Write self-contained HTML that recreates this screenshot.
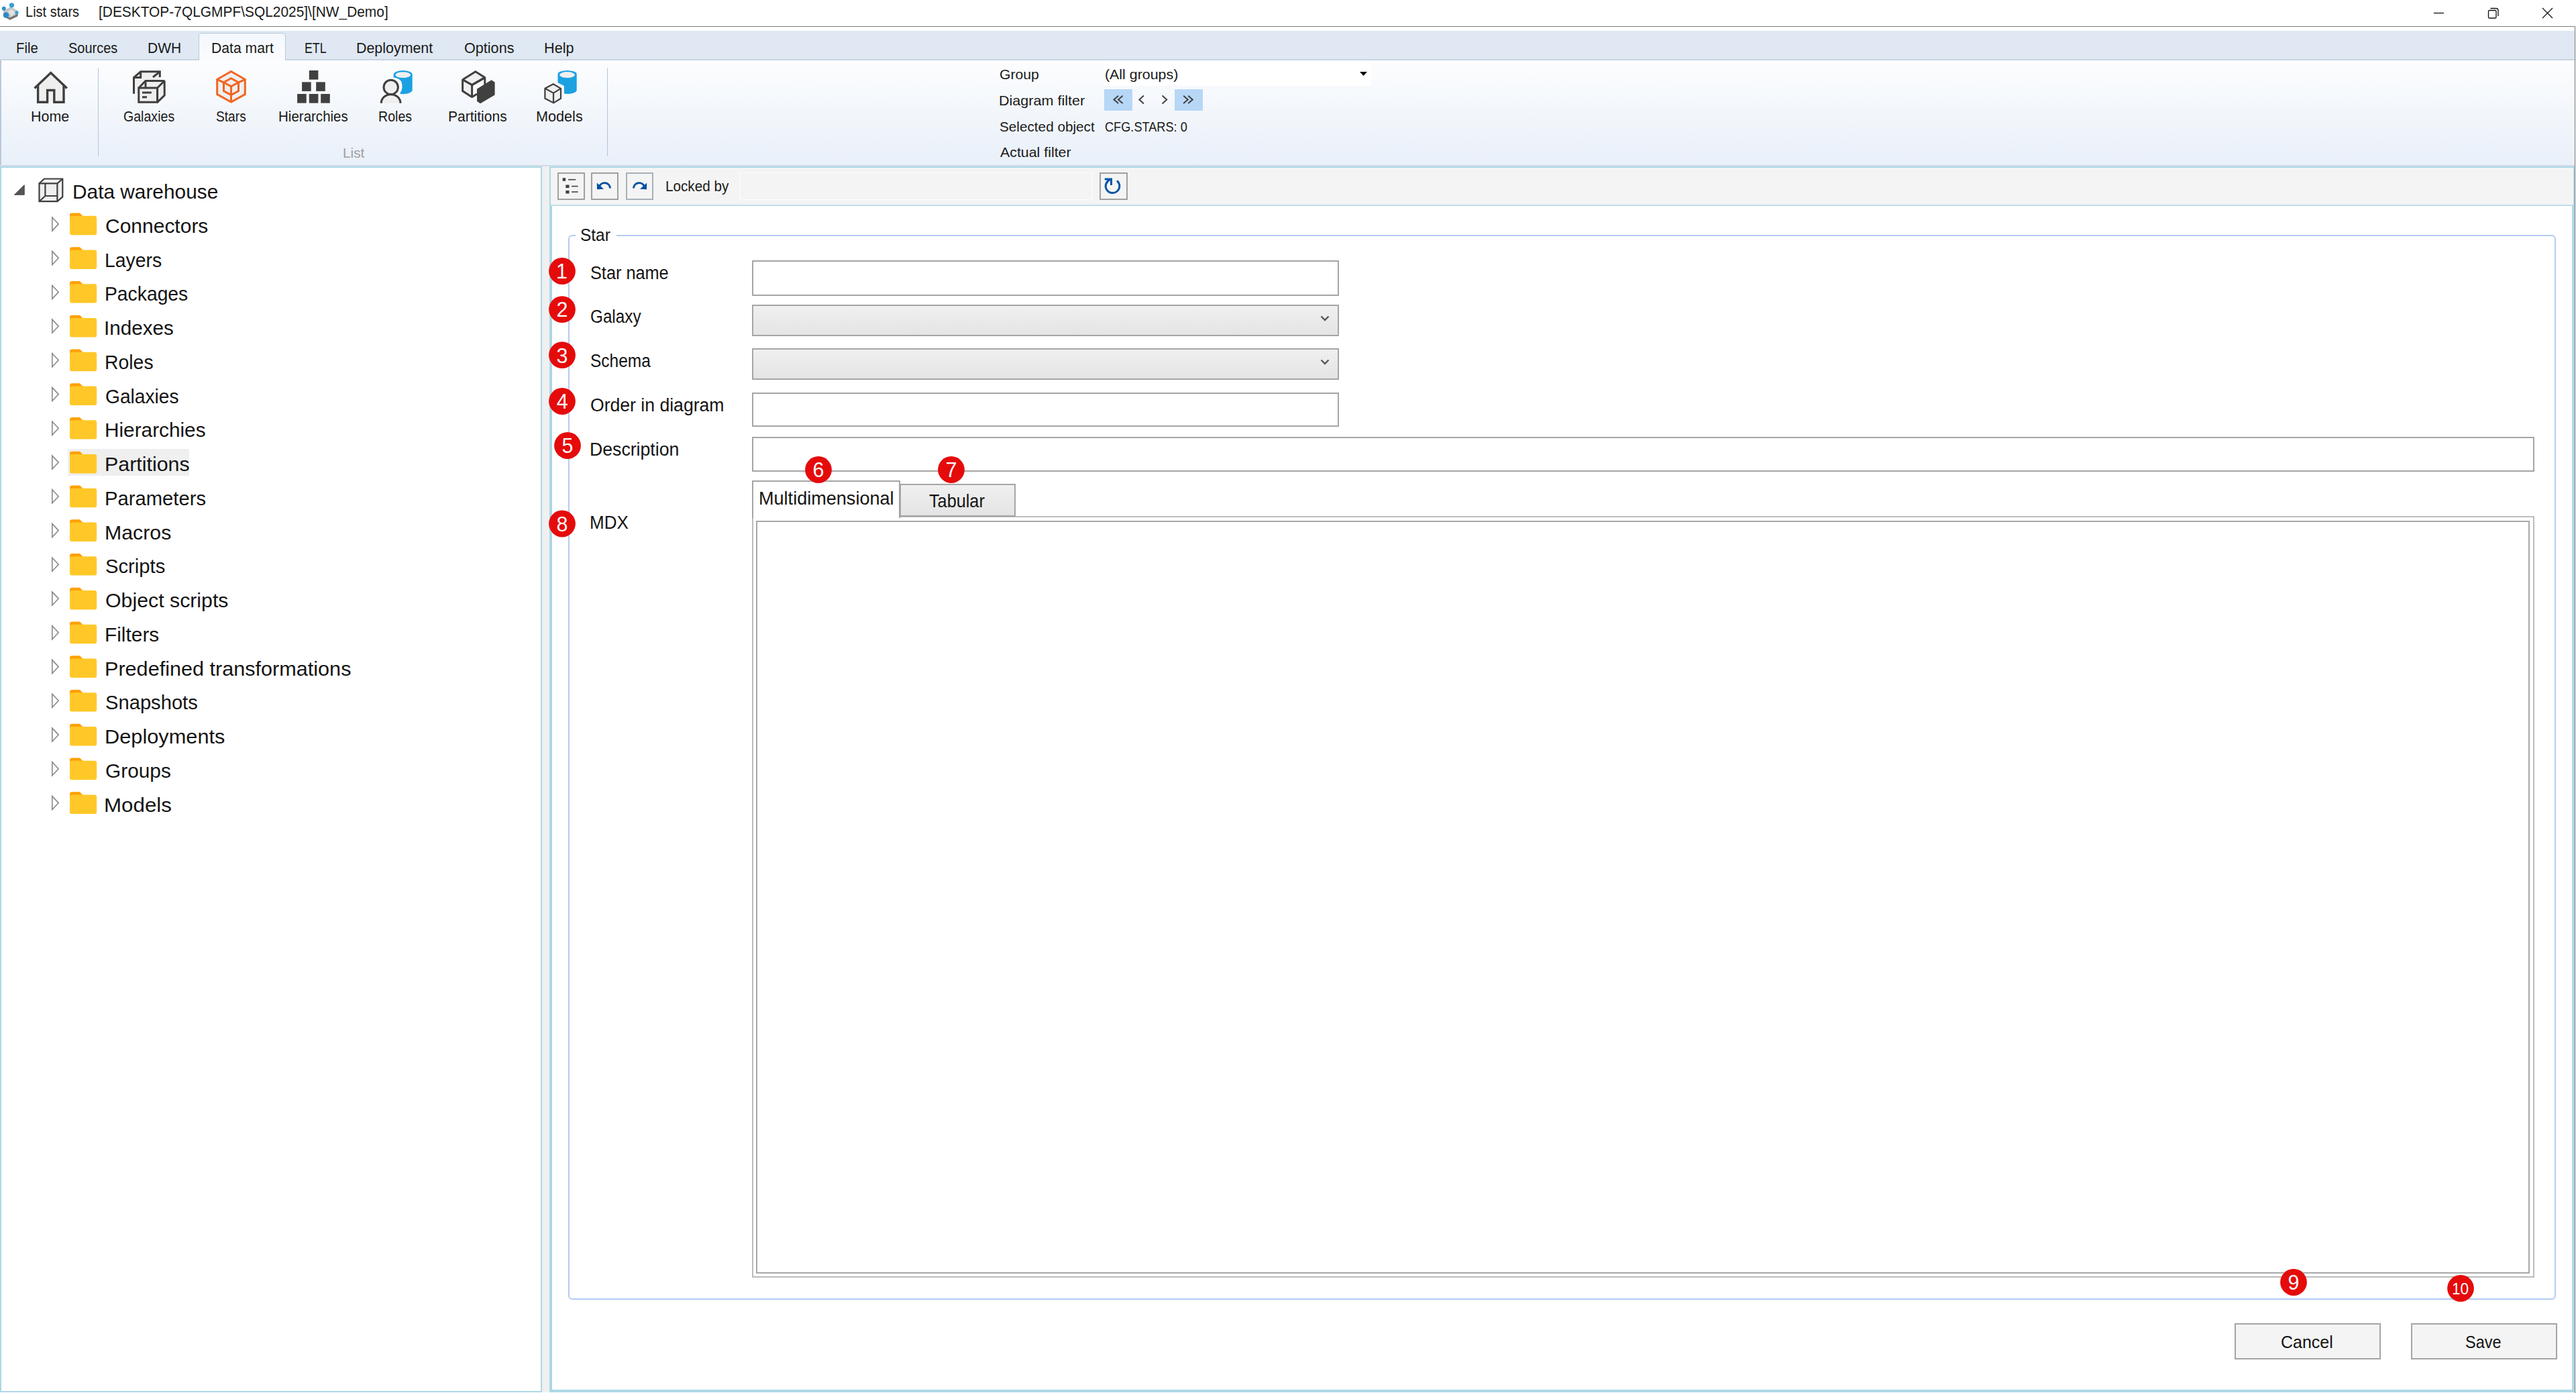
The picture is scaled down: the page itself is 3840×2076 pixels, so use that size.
<!DOCTYPE html>
<html><head><meta charset="utf-8"><title>List stars</title>
<style>
html,body{margin:0;padding:0;}
body{width:3840px;height:2076px;position:relative;overflow:hidden;background:#fff;font-family:"Liberation Sans",sans-serif;}
.r{position:absolute;}
.t{position:absolute;white-space:nowrap;transform-origin:0 0;}
svg{position:absolute;left:0;top:0;}
</style></head><body>
<div class="r" style="left:0px;top:39px;width:3839px;height:1px;background:#7a7a7a"></div>
<div class="r" style="left:3838px;top:39px;width:1px;height:2037px;background:#7a7a7a"></div>
<div class="r" style="left:0px;top:46px;width:3838px;height:42px;background:#dfe8f3"></div>
<div class="r" style="left:0px;top:88px;width:3838px;height:2px;background:#c8d5e2"></div>
<div class="r" style="left:0px;top:90px;width:3838px;height:156px;background:linear-gradient(#fcfdfe,#e9f0f9);border-left:2px solid #b9c9da;box-sizing:border-box"></div>
<div class="r" style="left:296px;top:49px;width:130px;height:41px;background:linear-gradient(#f4f7fc,#fbfcfe);border:1px solid #b9c9db;border-bottom:none;border-radius:5px 5px 0 0;box-sizing:border-box"></div>
<div class="r" style="left:297px;top:88px;width:128px;height:3px;background:#fbfcfe"></div>
<div class="r" style="left:0px;top:246px;width:3838px;height:1px;background:#cad6e3"></div>
<div class="r" style="left:0px;top:247px;width:3838px;height:1px;background:#d9e1ec"></div>
<div class="r" style="left:146px;top:101px;width:1px;height:132px;background:#b3c6da"></div>
<div class="r" style="left:905px;top:101px;width:1px;height:132px;background:#b3c6da"></div>
<div class="r" style="left:1645px;top:93px;width:399px;height:35px;background:#fff"></div>
<div class="r" style="left:1646px;top:133px;width:42px;height:32px;background:#b7d7f6"></div>
<div class="r" style="left:1751px;top:133px;width:42px;height:32px;background:#b7d7f6"></div>
<div class="r" style="left:0px;top:248px;width:808px;height:1827px;background:#fff;border:2px solid #acd8e6;box-sizing:border-box"></div>
<div class="r" style="left:808px;top:248px;width:11px;height:1827px;background:#f0f0f0"></div>
<div class="r" style="left:819px;top:248px;width:3019px;height:1827px;background:#fff;border:2px solid #acd8e6;box-sizing:border-box"></div>
<div class="r" style="left:821px;top:307px;width:2px;height:1766px;background:#acd8e6"></div>
<div class="r" style="left:3834px;top:307px;width:2px;height:1766px;background:#acd8e6"></div>
<div class="r" style="left:821px;top:2071px;width:3015px;height:2px;background:#acd8e6"></div>
<div class="r" style="left:821px;top:250px;width:3015px;height:55px;background:#f4f4f4"></div>
<div class="r" style="left:821px;top:305px;width:3015px;height:2px;background:#bfe0ea"></div>
<div class="r" style="left:831px;top:257px;width:41px;height:41px;background:#f4f4f4;border:2px solid #a0a0a0;box-sizing:border-box"></div>
<div class="r" style="left:881px;top:257px;width:41px;height:41px;background:#f4f4f4;border:2px solid #a0a0a0;box-sizing:border-box"></div>
<div class="r" style="left:933px;top:257px;width:41px;height:41px;background:#f4f4f4;border:2px solid #a8b0b8;box-sizing:border-box"></div>
<div class="r" style="left:1639px;top:257px;width:42px;height:41px;background:#f4f4f4;border:2px solid #a0a0a0;box-sizing:border-box"></div>
<div class="r" style="left:1103px;top:257px;width:525px;height:41px;background:#f4f4f4;border:1px solid #fdfdfd;box-sizing:border-box"></div>
<div class="r" style="left:847px;top:350px;width:2963px;height:1587px;border:2px solid #b4cbf2;border-radius:6px;box-sizing:border-box"></div>
<div class="r" style="left:858px;top:345px;width:61px;height:10px;background:#fff"></div>
<div class="r" style="left:1121px;top:388px;width:875px;height:53px;background:#fff;border:2px solid #a5a5a5;box-sizing:border-box"></div>
<div class="r" style="left:1121px;top:454px;width:875px;height:47px;background:linear-gradient(#f0f0f0,#e4e4e4);border:2px solid #a5a5a5;box-sizing:border-box"></div>
<div class="r" style="left:1121px;top:519px;width:875px;height:47px;background:linear-gradient(#f0f0f0,#e4e4e4);border:2px solid #a5a5a5;box-sizing:border-box"></div>
<div class="r" style="left:1121px;top:585px;width:875px;height:51px;background:#fff;border:2px solid #a5a5a5;box-sizing:border-box"></div>
<div class="r" style="left:1121px;top:651px;width:2657px;height:52px;background:#fff;border:2px solid #a5a5a5;box-sizing:border-box"></div>
<div class="r" style="left:1121px;top:769px;width:2657px;height:1135px;border:2px solid #bcbcbc;box-sizing:border-box"></div>
<div class="r" style="left:1127px;top:776px;width:2644px;height:1122px;border:2px solid #a8a8a8;box-sizing:border-box"></div>
<div class="r" style="left:1341px;top:721px;width:173px;height:49px;background:linear-gradient(#f0f0f0,#e4e4e4);border:2px solid #a5a5a5;box-sizing:border-box"></div>
<div class="r" style="left:1121px;top:716px;width:221px;height:56px;background:#fff;border:2px solid #a5a5a5;border-bottom:none;box-sizing:border-box"></div>
<div class="r" style="left:3331px;top:1972px;width:218px;height:54px;background:#f4f4f4;border:2px solid #a5a5a5;box-sizing:border-box"></div>
<div class="r" style="left:3594px;top:1972px;width:218px;height:54px;background:#f4f4f4;border:2px solid #a5a5a5;box-sizing:border-box"></div>
<div class="r" style="left:101px;top:669px;width:181px;height:40px;background:#efefef"></div>
<svg width="3840" height="2076" viewBox="0 0 3840 2076">
<path d="M77.8 323.9 L77.8 343.9 L87.2 333.9 Z" fill="none" stroke="#8a8a8a" stroke-width="1.6" stroke-linejoin="miter"/>
<path d="M104 326.1 V320.6 Q104 317.4 107.5 317.4 L119 317.4 L123.5 322.1 V326.1 Z" fill="#ffa000"/>
<rect x="104" y="321.8" width="40.2" height="28.4" rx="3" fill="#ffc828"/>
<path d="M77.8 374.6 L77.8 394.6 L87.2 384.6 Z" fill="none" stroke="#8a8a8a" stroke-width="1.6" stroke-linejoin="miter"/>
<path d="M104 376.8 V371.3 Q104 368.2 107.5 368.2 L119 368.2 L123.5 372.8 V376.8 Z" fill="#ffa000"/>
<rect x="104" y="372.5" width="40.2" height="28.4" rx="3" fill="#ffc828"/>
<path d="M77.8 425.4 L77.8 445.4 L87.2 435.4 Z" fill="none" stroke="#8a8a8a" stroke-width="1.6" stroke-linejoin="miter"/>
<path d="M104 427.6 V422.1 Q104 418.9 107.5 418.9 L119 418.9 L123.5 423.6 V427.6 Z" fill="#ffa000"/>
<rect x="104" y="423.2" width="40.2" height="28.4" rx="3" fill="#ffc828"/>
<path d="M77.8 476.1 L77.8 496.1 L87.2 486.1 Z" fill="none" stroke="#8a8a8a" stroke-width="1.6" stroke-linejoin="miter"/>
<path d="M104 478.3 V472.8 Q104 469.7 107.5 469.7 L119 469.7 L123.5 474.3 V478.3 Z" fill="#ffa000"/>
<rect x="104" y="474.0" width="40.2" height="28.4" rx="3" fill="#ffc828"/>
<path d="M77.8 526.8 L77.8 546.8 L87.2 536.8 Z" fill="none" stroke="#8a8a8a" stroke-width="1.6" stroke-linejoin="miter"/>
<path d="M104 529.0 V523.5 Q104 520.4 107.5 520.4 L119 520.4 L123.5 525.0 V529.0 Z" fill="#ffa000"/>
<rect x="104" y="524.8" width="40.2" height="28.4" rx="3" fill="#ffc828"/>
<path d="M77.8 577.6 L77.8 597.6 L87.2 587.6 Z" fill="none" stroke="#8a8a8a" stroke-width="1.6" stroke-linejoin="miter"/>
<path d="M104 579.8 V574.3 Q104 571.2 107.5 571.2 L119 571.2 L123.5 575.8 V579.8 Z" fill="#ffa000"/>
<rect x="104" y="575.5" width="40.2" height="28.4" rx="3" fill="#ffc828"/>
<path d="M77.8 628.3 L77.8 648.3 L87.2 638.3 Z" fill="none" stroke="#8a8a8a" stroke-width="1.6" stroke-linejoin="miter"/>
<path d="M104 630.5 V625.0 Q104 621.9 107.5 621.9 L119 621.9 L123.5 626.5 V630.5 Z" fill="#ffa000"/>
<rect x="104" y="626.2" width="40.2" height="28.4" rx="3" fill="#ffc828"/>
<path d="M77.8 679.1 L77.8 699.1 L87.2 689.1 Z" fill="none" stroke="#8a8a8a" stroke-width="1.6" stroke-linejoin="miter"/>
<path d="M104 681.3 V675.8 Q104 672.7 107.5 672.7 L119 672.7 L123.5 677.3 V681.3 Z" fill="#ffa000"/>
<rect x="104" y="677.0" width="40.2" height="28.4" rx="3" fill="#ffc828"/>
<path d="M77.8 729.8 L77.8 749.8 L87.2 739.8 Z" fill="none" stroke="#8a8a8a" stroke-width="1.6" stroke-linejoin="miter"/>
<path d="M104 732.0 V726.5 Q104 723.4 107.5 723.4 L119 723.4 L123.5 728.0 V732.0 Z" fill="#ffa000"/>
<rect x="104" y="727.8" width="40.2" height="28.4" rx="3" fill="#ffc828"/>
<path d="M77.8 780.6 L77.8 800.6 L87.2 790.6 Z" fill="none" stroke="#8a8a8a" stroke-width="1.6" stroke-linejoin="miter"/>
<path d="M104 782.8 V777.3 Q104 774.2 107.5 774.2 L119 774.2 L123.5 778.8 V782.8 Z" fill="#ffa000"/>
<rect x="104" y="778.5" width="40.2" height="28.4" rx="3" fill="#ffc828"/>
<path d="M77.8 831.3 L77.8 851.3 L87.2 841.3 Z" fill="none" stroke="#8a8a8a" stroke-width="1.6" stroke-linejoin="miter"/>
<path d="M104 833.5 V828.0 Q104 824.9 107.5 824.9 L119 824.9 L123.5 829.5 V833.5 Z" fill="#ffa000"/>
<rect x="104" y="829.2" width="40.2" height="28.4" rx="3" fill="#ffc828"/>
<path d="M77.8 882.1 L77.8 902.1 L87.2 892.1 Z" fill="none" stroke="#8a8a8a" stroke-width="1.6" stroke-linejoin="miter"/>
<path d="M104 884.3 V878.8 Q104 875.7 107.5 875.7 L119 875.7 L123.5 880.3 V884.3 Z" fill="#ffa000"/>
<rect x="104" y="880.0" width="40.2" height="28.4" rx="3" fill="#ffc828"/>
<path d="M77.8 932.8 L77.8 952.8 L87.2 942.8 Z" fill="none" stroke="#8a8a8a" stroke-width="1.6" stroke-linejoin="miter"/>
<path d="M104 935.0 V929.5 Q104 926.4 107.5 926.4 L119 926.4 L123.5 931.0 V935.0 Z" fill="#ffa000"/>
<rect x="104" y="930.8" width="40.2" height="28.4" rx="3" fill="#ffc828"/>
<path d="M77.8 983.6 L77.8 1003.6 L87.2 993.6 Z" fill="none" stroke="#8a8a8a" stroke-width="1.6" stroke-linejoin="miter"/>
<path d="M104 985.8 V980.3 Q104 977.2 107.5 977.2 L119 977.2 L123.5 981.8 V985.8 Z" fill="#ffa000"/>
<rect x="104" y="981.5" width="40.2" height="28.4" rx="3" fill="#ffc828"/>
<path d="M77.8 1034.3 L77.8 1054.3 L87.2 1044.3 Z" fill="none" stroke="#8a8a8a" stroke-width="1.6" stroke-linejoin="miter"/>
<path d="M104 1036.5 V1031.0 Q104 1028.0 107.5 1028.0 L119 1028.0 L123.5 1032.5 V1036.5 Z" fill="#ffa000"/>
<rect x="104" y="1032.2" width="40.2" height="28.4" rx="3" fill="#ffc828"/>
<path d="M77.8 1085.1 L77.8 1105.1 L87.2 1095.1 Z" fill="none" stroke="#8a8a8a" stroke-width="1.6" stroke-linejoin="miter"/>
<path d="M104 1087.3 V1081.8 Q104 1078.7 107.5 1078.7 L119 1078.7 L123.5 1083.3 V1087.3 Z" fill="#ffa000"/>
<rect x="104" y="1083.0" width="40.2" height="28.4" rx="3" fill="#ffc828"/>
<path d="M77.8 1135.8 L77.8 1155.8 L87.2 1145.8 Z" fill="none" stroke="#8a8a8a" stroke-width="1.6" stroke-linejoin="miter"/>
<path d="M104 1138.0 V1132.5 Q104 1129.5 107.5 1129.5 L119 1129.5 L123.5 1134.0 V1138.0 Z" fill="#ffa000"/>
<rect x="104" y="1133.8" width="40.2" height="28.4" rx="3" fill="#ffc828"/>
<path d="M77.8 1186.6 L77.8 1206.6 L87.2 1196.6 Z" fill="none" stroke="#8a8a8a" stroke-width="1.6" stroke-linejoin="miter"/>
<path d="M104 1188.8 V1183.3 Q104 1180.2 107.5 1180.2 L119 1180.2 L123.5 1184.8 V1188.8 Z" fill="#ffa000"/>
<rect x="104" y="1184.5" width="40.2" height="28.4" rx="3" fill="#ffc828"/>
<circle cx="838" cy="404" r="19.9" fill="#e50b0b"/>
<circle cx="838" cy="461.1" r="19.9" fill="#e50b0b"/>
<circle cx="838" cy="529.2" r="19.9" fill="#e50b0b"/>
<circle cx="838" cy="598" r="19.9" fill="#e50b0b"/>
<circle cx="846" cy="664" r="19.9" fill="#e50b0b"/>
<circle cx="838" cy="780.5" r="19.9" fill="#e50b0b"/>
<circle cx="1220" cy="700" r="19.9" fill="#e50b0b"/>
<circle cx="1418" cy="700" r="19.9" fill="#e50b0b"/>
<circle cx="3419" cy="1911" r="19.9" fill="#e50b0b"/>
<circle cx="3668" cy="1920" r="19.9" fill="#e50b0b"/>
<path d="M21.5 290.2 L36.2 290.2 L36.2 275.8 Z" fill="#555" stroke="#444" stroke-width="1"/>
<g fill="none" stroke="#3f3f3f" stroke-width="2.2" stroke-linejoin="miter"><path d="M58.5 273.3 L66 266.5 H93.3 V293.4 L85.4 300.2 H58.5 Z" fill="#efefef" stroke="none"/><path d="M58.5 273.3 H85.4 V300.2 H58.5 Z"/><path d="M58.5 273.3 L66 266.5 H93.3 V293.4 L85.4 300.2"/><path d="M85.4 273.3 L93.3 266.5"/><path d="M67.4 273.3 V292 H85.4 M58.5 300.2 L67.4 292"/></g>
<path d="M56.5 124 L75.7 106 L95 124 V152 H56.5 Z" fill="#efefef"/>
<g fill="none" stroke="#3f3f3f" stroke-width="3.4" stroke-linecap="butt" stroke-linejoin="miter"><path d="M51.5 131.5 L75.7 108.5 L99.8 131.5"/><path d="M56.6 126 V152.2 H70.6 V134.5 H80.8 V152.2 H95 V126"/></g>
<path d="M199.5 139.7 V115.4 L209.7 106.8 H238.3 V118 L217 120.5 L206.8 131 V139.7 Z" fill="#efefef"/>
<path d="M206.8 131 L217 120.5 H245.2 V142 L234.6 152.3 H206.8 Z" fill="#efefef"/>
<g fill="none" stroke="#3f3f3f" stroke-width="3" stroke-linejoin="miter" stroke-miterlimit="1.6"><path d="M206.8 131 H234.6 V152.3 H206.8 Z" fill="#efefef"/><path d="M234.6 131 L245.2 120.5 V142 L234.6 152.3 Z" fill="#efefef"/><path d="M206.8 131 L217 120.5 H245.2" /><path d="M217 120.5 V131"/><path d="M212 138 H225.8 M212 144.8 H219"/><path d="M199.5 139.7 V115.4 L209.7 106.8 H238.3 V115"/><path d="M199.5 115.4 H209.7 V106.8 M238.3 106.8 L228 115"/></g>
<path d="M344.5 106.5 L365.3 118.3 V140.5 L344.5 152 L323.7 140.5 V118.3 Z" fill="#efefef" stroke="#f26522" stroke-width="3" stroke-linejoin="miter"/>
<g fill="none" stroke="#f26522" stroke-width="3" stroke-linejoin="miter"><path d="M344.5 116.8 L355.5 122.8 L344.5 128.8 L333.5 122.8 Z"/><path d="M333.5 122.8 V135.7 L344.5 141.5 L355.5 135.7 V122.8"/><path d="M344.5 128.8 V152"/><path d="M323.7 118.3 L333.5 122.8 M365.3 118.3 L355.5 122.8"/></g>
<rect x="460.8" y="105" width="13.6" height="13.6" fill="#404040"/>
<rect x="450.1" y="122.3" width="13.6" height="13.6" fill="#404040"/>
<rect x="471.2" y="122.3" width="13.6" height="13.6" fill="#404040"/>
<rect x="443.1" y="140" width="13.6" height="13.6" fill="#404040"/>
<rect x="460.8" y="140" width="13.6" height="13.6" fill="#404040"/>
<rect x="478.2" y="140" width="13.6" height="13.6" fill="#404040"/>
<path d="M586.7 111 A14 6 0 0 1 614.7 111 V134 A14 6 0 0 1 596 139.8 Q602 131 598 121 Q594 116 586.7 115.5 Z" fill="#1ba1e2"/>
<ellipse cx="600.7" cy="111.6" rx="11.4" ry="4.4" fill="#efefef"/>
<circle cx="582.7" cy="129.9" r="10.7" fill="#efefef" stroke="#3f3f3f" stroke-width="3"/>
<path d="M568.3 153.7 A14.3 13 0 0 1 597 153.7" fill="#efefef" stroke="#3f3f3f" stroke-width="3"/>
<path d="M711 132.5 L732.5 119.2 L737.6 122.6 V141.5 L716 154.3 L711 151 Z" fill="#404040"/>
<g fill="none" stroke="#3f3f3f" stroke-width="3" stroke-linejoin="miter" stroke-miterlimit="1.6"><path d="M708.8 106.8 L722.8 115.6 L703.6 126.6 L689.6 118.8 Z" fill="#efefef"/><path d="M689.6 118.8 V135.6 L703.6 144.8 V126.6 Z" fill="#efefef"/><path d="M703.6 126.6 L722.8 115.6 V128"/><path d="M703.6 144.8 L711 140"/></g>
<path d="M831.5 110.5 A14.1 5.5 0 0 1 859.7 110.5 V134.5 A14 5.4 0 0 1 840.9 139.6 V128 L831.5 123.3 Z" fill="#1ba1e2"/>
<ellipse cx="845.5" cy="111.6" rx="11.4" ry="4.5" fill="#efefef"/>
<g fill="#efefef" stroke="#3f3f3f" stroke-width="2.2" stroke-linejoin="round"><path d="M824.8 125.2 L836 131.9 V146.7 L825.2 153.4 L812.4 146.7 V131.7 Z"/><path d="M812.4 131.7 L825 138.6 L836 131.9 M825 138.6 V153.4" fill="none"/></g>
<g fill="#404040"><rect x="838.7" y="265.2" width="4.4" height="4.6"/><rect x="843.3" y="275.5" width="5.2" height="4.6"/><rect x="843.3" y="283.9" width="5.2" height="4.6"/></g>
<g stroke="#404040" stroke-width="1.6"><path d="M847 267.7 H858.2"/><path d="M852 277.6 H861.6"/><path d="M852 286 H861.6"/></g>
<path d="M909.6 280.5 A8.4 8.4 0 0 0 893.6 277.5" fill="none" stroke="#0050a0" stroke-width="3"/>
<path d="M889.8 272.5 L890 282.2 L900 281.8 Z" fill="#0050a0"/>
<path d="M944.4 280.5 A8.4 8.4 0 0 1 960.4 277.5" fill="none" stroke="#0050a0" stroke-width="3"/>
<path d="M964.2 272.5 L964 282.2 L954 281.8 Z" fill="#0050a0"/>
<path d="M1665 269.3 A10.3 10.3 0 1 1 1654.5 267.8" fill="none" stroke="#0055a6" stroke-width="3"/>
<path d="M1646.8 267 H1656.5 V276" fill="none" stroke="#0055a6" stroke-width="3"/>
<path d="M1969.5 471.5 L1975 477.0 L1980.5 471.5" fill="none" stroke="#555" stroke-width="2.4"/>
<path d="M1969.5 536.5 L1975 542.0 L1980.5 536.5" fill="none" stroke="#555" stroke-width="2.4"/>
<path d="M2027 107 H2038 L2032.5 113 Z" fill="#000"/>
<g fill="none" stroke="#404040" stroke-width="2" stroke-linecap="round" stroke-linejoin="miter"><path d="M1666.5 143.2 L1660.5 148.4 L1666.5 153.6 M1673 143.2 L1667 148.4 L1673 153.6"/><path d="M1704.4 143 L1698.4 148.6 L1704.4 154"/><path d="M1733.2 143 L1739.2 148.6 L1733.2 154"/><path d="M1764.8 143.2 L1770.8 148.4 L1764.8 153.6 M1771.8 143.2 L1777.8 148.4 L1771.8 153.6"/></g>
<g fill="none" stroke="#111" stroke-width="1.3"><path d="M3628 19.5 H3643"/><rect x="3709.5" y="15.5" width="11.5" height="11.5" rx="1.6"/><path d="M3712.5 12.5 H3721 Q3724 12.5 3724 15.5 V24"/><path d="M3790 12 L3805 27 M3805 12 L3790 27"/></g>
<g><path d="M5 16 L16 10 L26.5 16 V24.5 L15 30 L5 25 Z" fill="#c4c6c8"/><path d="M7 25 L15 29.5 L26.5 24 V20.5 L15 26.5 L7 22.5 Z" fill="#707070"/><path d="M12 17 L17.5 14 L23 19 L17 24 Z" fill="#e2e4e6"/><circle cx="17.5" cy="7.8" r="3.6" fill="#3aa0d0"/><circle cx="5.8" cy="12.8" r="3" fill="#2f8fc0"/><circle cx="25" cy="18.8" r="2.6" fill="#3aa0d0"/><circle cx="9" cy="22.5" r="4.3" fill="#2a8cc0"/></g>
</svg>
<div class="t" style="left:38.00px;top:7.48px;font-size:21.88px;line-height:21.88px;color:#1a1a1a;transform:scaleX(0.9151);">List stars</div>
<div class="t" style="left:147.04px;top:7.48px;font-size:21.88px;line-height:21.88px;color:#1a1a1a;transform:scaleX(0.9555);">[DESKTOP-7QLGMPF\SQL2025]\[NW_Demo]</div>
<div class="t" style="left:23.67px;top:61.10px;font-size:21.74px;line-height:21.74px;color:#1a1a1a;transform:scaleX(0.9355);">File</div>
<div class="t" style="left:101.60px;top:61.10px;font-size:21.74px;line-height:21.74px;color:#1a1a1a;transform:scaleX(0.9187);">Sources</div>
<div class="t" style="left:220.02px;top:61.10px;font-size:21.74px;line-height:21.74px;color:#1a1a1a;transform:scaleX(0.9676);">DWH</div>
<div class="t" style="left:315.21px;top:61.10px;font-size:21.74px;line-height:21.74px;color:#1a1a1a;transform:scaleX(0.9735);">Data mart</div>
<div class="t" style="left:453.58px;top:61.10px;font-size:21.74px;line-height:21.74px;color:#1a1a1a;transform:scaleX(0.8187);">ETL</div>
<div class="t" style="left:531.49px;top:61.10px;font-size:21.74px;line-height:21.74px;color:#1a1a1a;transform:scaleX(0.9848);">Deployment</div>
<div class="t" style="left:691.53px;top:61.10px;font-size:21.74px;line-height:21.74px;color:#1a1a1a;transform:scaleX(0.9938);">Options</div>
<div class="t" style="left:810.97px;top:61.10px;font-size:21.74px;line-height:21.74px;color:#1a1a1a;transform:scaleX(0.9961);">Help</div>
<div class="t" style="left:46.28px;top:162.90px;font-size:21.74px;line-height:21.74px;color:#1a1a1a;transform:scaleX(0.9870);">Home</div>
<div class="t" style="left:183.52px;top:162.90px;font-size:21.74px;line-height:21.74px;color:#1a1a1a;transform:scaleX(0.9007);">Galaxies</div>
<div class="t" style="left:322.04px;top:162.90px;font-size:21.74px;line-height:21.74px;color:#1a1a1a;transform:scaleX(0.8812);">Stars</div>
<div class="t" style="left:414.76px;top:162.90px;font-size:21.74px;line-height:21.74px;color:#1a1a1a;transform:scaleX(0.9442);">Hierarchies</div>
<div class="t" style="left:564.03px;top:162.90px;font-size:21.74px;line-height:21.74px;color:#1a1a1a;transform:scaleX(0.9011);">Roles</div>
<div class="t" style="left:667.72px;top:162.90px;font-size:21.74px;line-height:21.74px;color:#1a1a1a;transform:scaleX(0.9676);">Partitions</div>
<div class="t" style="left:799.07px;top:162.90px;font-size:21.74px;line-height:21.74px;color:#1a1a1a;transform:scaleX(0.9954);">Models</div>
<div class="t" style="left:511.33px;top:218.52px;font-size:19.71px;line-height:19.71px;color:#a0a0a0;transform:scaleX(1.0561);">List</div>
<div class="t" style="left:1489.94px;top:101.33px;font-size:20.87px;line-height:20.87px;color:#1a1a1a;transform:scaleX(1.0153);">Group</div>
<div class="t" style="left:1489.27px;top:139.83px;font-size:20.87px;line-height:20.87px;color:#1a1a1a;transform:scaleX(1.0337);">Diagram filter</div>
<div class="t" style="left:1490.07px;top:178.73px;font-size:20.87px;line-height:20.87px;color:#1a1a1a;transform:scaleX(0.9936);">Selected object</div>
<div class="t" style="left:1491.00px;top:217.13px;font-size:20.87px;line-height:20.87px;color:#1a1a1a;transform:scaleX(1.0235);">Actual filter</div>
<div class="t" style="left:1646.72px;top:101.33px;font-size:20.87px;line-height:20.87px;color:#1a1a1a;transform:scaleX(1.0246);">(All groups)</div>
<div class="t" style="left:1647.09px;top:178.73px;font-size:20.87px;line-height:20.87px;color:#1a1a1a;transform:scaleX(0.8708);">CFG.STARS: 0</div>
<div class="t" style="left:991.64px;top:267.26px;font-size:22.61px;line-height:22.61px;color:#1a1a1a;transform:scaleX(0.9152);">Locked by</div>
<div class="t" style="left:864.50px;top:337.56px;font-size:25.80px;line-height:25.80px;color:#141414;transform:scaleX(0.9461);">Star</div>
<div class="t" style="left:879.86px;top:394.00px;font-size:26.81px;line-height:26.81px;color:#141414;transform:scaleX(0.9432);">Star name</div>
<div class="t" style="left:879.79px;top:459.20px;font-size:26.81px;line-height:26.81px;color:#141414;transform:scaleX(0.9056);">Galaxy</div>
<div class="t" style="left:879.90px;top:525.40px;font-size:26.81px;line-height:26.81px;color:#141414;transform:scaleX(0.9129);">Schema</div>
<div class="t" style="left:879.80px;top:591.30px;font-size:26.81px;line-height:26.81px;color:#141414;transform:scaleX(0.9921);">Order in diagram</div>
<div class="t" style="left:878.87px;top:656.80px;font-size:26.81px;line-height:26.81px;color:#141414;transform:scaleX(0.9949);">Description</div>
<div class="t" style="left:878.92px;top:766.20px;font-size:26.81px;line-height:26.81px;color:#141414;transform:scaleX(0.9694);">MDX</div>
<div class="t" style="left:1130.63px;top:728.69px;font-size:27.54px;line-height:27.54px;color:#141414;transform:scaleX(0.9830);">Multidimensional</div>
<div class="t" style="left:1384.70px;top:733.34px;font-size:27.25px;line-height:27.25px;color:#141414;transform:scaleX(0.9266);">Tabular</div>
<div class="t" style="left:3400.45px;top:1987.43px;font-size:26.67px;line-height:26.67px;color:#141414;transform:scaleX(0.9366);">Cancel</div>
<div class="t" style="left:3675.24px;top:1987.43px;font-size:26.67px;line-height:26.67px;color:#141414;transform:scaleX(0.8801);">Save</div>
<div class="t" style="left:108.11px;top:271.42px;font-size:29.28px;line-height:29.28px;color:#141414;transform:scaleX(1.0193);">Data warehouse</div>
<div class="t" style="left:156.50px;top:321.87px;font-size:29.28px;line-height:29.28px;color:#141414;transform:scaleX(1.0248);">Connectors</div>
<div class="t" style="left:155.73px;top:372.62px;font-size:29.28px;line-height:29.28px;color:#141414;transform:scaleX(0.9709);">Layers</div>
<div class="t" style="left:155.74px;top:423.37px;font-size:29.28px;line-height:29.28px;color:#141414;transform:scaleX(0.9668);">Packages</div>
<div class="t" style="left:155.33px;top:474.12px;font-size:29.28px;line-height:29.28px;color:#141414;transform:scaleX(1.0136);">Indexes</div>
<div class="t" style="left:155.73px;top:524.87px;font-size:29.28px;line-height:29.28px;color:#141414;transform:scaleX(0.9702);">Roles</div>
<div class="t" style="left:156.59px;top:575.62px;font-size:29.28px;line-height:29.28px;color:#141414;transform:scaleX(0.9624);">Galaxies</div>
<div class="t" style="left:155.62px;top:626.37px;font-size:29.28px;line-height:29.28px;color:#141414;transform:scaleX(1.0171);">Hierarchies</div>
<div class="t" style="left:155.57px;top:677.12px;font-size:29.28px;line-height:29.28px;color:#141414;transform:scaleX(1.0387);">Partitions</div>
<div class="t" style="left:155.66px;top:727.87px;font-size:29.28px;line-height:29.28px;color:#141414;transform:scaleX(0.9987);">Parameters</div>
<div class="t" style="left:155.58px;top:778.62px;font-size:29.28px;line-height:29.28px;color:#141414;transform:scaleX(1.0350);">Macros</div>
<div class="t" style="left:156.68px;top:829.37px;font-size:29.28px;line-height:29.28px;color:#141414;transform:scaleX(0.9989);">Scripts</div>
<div class="t" style="left:156.64px;top:880.12px;font-size:29.28px;line-height:29.28px;color:#141414;transform:scaleX(1.0353);">Object scripts</div>
<div class="t" style="left:155.61px;top:930.87px;font-size:29.28px;line-height:29.28px;color:#141414;transform:scaleX(1.0202);">Filters</div>
<div class="t" style="left:155.55px;top:981.62px;font-size:29.28px;line-height:29.28px;color:#141414;transform:scaleX(1.0457);">Predefined transformations</div>
<div class="t" style="left:156.69px;top:1032.37px;font-size:29.28px;line-height:29.28px;color:#141414;transform:scaleX(0.9964);">Snapshots</div>
<div class="t" style="left:155.54px;top:1083.12px;font-size:29.28px;line-height:29.28px;color:#141414;transform:scaleX(1.0504);">Deployments</div>
<div class="t" style="left:156.51px;top:1133.87px;font-size:29.28px;line-height:29.28px;color:#141414;transform:scaleX(1.0199);">Groups</div>
<div class="t" style="left:155.49px;top:1184.62px;font-size:29.28px;line-height:29.28px;color:#141414;transform:scaleX(1.0698);">Models</div>
<div class="t" style="left:829.10px;top:389.34px;font-size:30.43px;line-height:30.43px;color:#fff;transform:scaleX(1.0000);">1</div>
<div class="t" style="left:829.55px;top:446.44px;font-size:30.43px;line-height:30.43px;color:#fff;transform:scaleX(1.0000);">2</div>
<div class="t" style="left:829.55px;top:514.54px;font-size:30.43px;line-height:30.43px;color:#fff;transform:scaleX(1.0000);">3</div>
<div class="t" style="left:829.71px;top:583.34px;font-size:30.43px;line-height:30.43px;color:#fff;transform:scaleX(1.0000);">4</div>
<div class="t" style="left:837.55px;top:649.34px;font-size:30.43px;line-height:30.43px;color:#fff;transform:scaleX(1.0000);">5</div>
<div class="t" style="left:829.48px;top:765.84px;font-size:30.43px;line-height:30.43px;color:#fff;transform:scaleX(1.0000);">8</div>
<div class="t" style="left:1211.40px;top:685.34px;font-size:30.43px;line-height:30.43px;color:#fff;transform:scaleX(1.0000);">6</div>
<div class="t" style="left:1409.55px;top:685.34px;font-size:30.43px;line-height:30.43px;color:#fff;transform:scaleX(1.0000);">7</div>
<div class="t" style="left:3410.55px;top:1896.34px;font-size:30.43px;line-height:30.43px;color:#fff;transform:scaleX(1.0000);">9</div>
<div class="t" style="left:3655.02px;top:1908.68px;font-size:23.77px;line-height:23.77px;color:#fff;transform:scaleX(0.9500);">10</div>
</body></html>
